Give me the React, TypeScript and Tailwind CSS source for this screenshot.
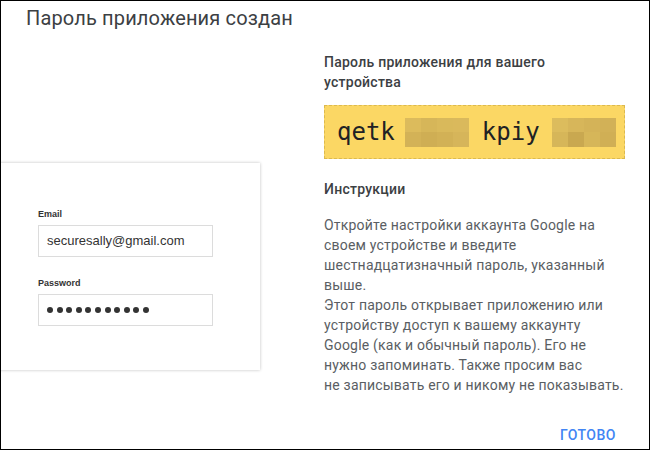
// App password created dialog (Google account, RU locale)

const blockA = ["#dcbb5c", "#d6b659", "#d9b95b", "#dab95c", "#d3b257", "#cfae54", "#d2b156", "#d6b55a"];
const blockB = ["#dcbc5d", "#d7b65a", "#d4b358", "#d2b157", "#d6b659", "#c9a850", "#d6b659", "#d0af55"];

function Blur({ colors }: { colors: string[] }) {
  return (
    <div className="grid grid-cols-4 w-[64px] h-[29px]">
      {colors.map((c, i) => (
        <div key={i} style={{ backgroundColor: c }} />
      ))}
    </div>
  );
}

const lines = [
  "Откройте настройки аккаунта Google на",
  "своем устройстве и введите",
  "шестнадцатизначный пароль, указанный",
  "выше.",
  "Этот пароль открывает приложению или",
  "устройству доступ к вашему аккаунту",
  "Google (как и обычный пароль). Его не",
  "нужно запоминать. Также просим вас",
  "не записывать его и никому не показывать.",
];

export default function App() {
  return (
    <div className="w-[650px] h-[450px] border border-black bg-white overflow-hidden font-['Roboto',sans-serif]">
      <h1 className="pl-[25px] pt-[3px] text-[20px] leading-[28px] tracking-[0.15px] text-[#3c4043]">
        Пароль приложения создан
      </h1>

      <div className="flex">
        {/* left: illustration of a sign-in card */}
        <div className="w-[323px] shrink-0 pt-[131px]">
          <div className="w-[280px] h-[207px] -ml-[21px] bg-white shadow-[0_0_3px_rgba(0,0,0,0.25)] pl-[58px] pt-[45px] font-['Liberation_Sans',Arial,sans-serif]">
            <div className="text-[9px] leading-[12px] font-bold text-[#333]">Email</div>
            <div className="mt-[5px] w-[175px] h-[32px] border border-[#dcdcdc] pl-[8px] flex items-center text-[13px] text-[#333]">
              securesally@gmail.com
            </div>
            <div className="mt-[20px] text-[9px] leading-[12px] font-bold text-[#333]">Password</div>
            <div className="mt-[5px] w-[175px] h-[32px] border border-[#dcdcdc] pl-[8px] flex items-center gap-[3.6px]">
              {Array.from({ length: 11 }).map((_, i) => (
                <span key={i} className="w-[6px] h-[6px] rounded-full bg-[#333]" />
              ))}
            </div>
          </div>
        </div>

        {/* right: password + instructions */}
        <div className="w-[301px] pt-[20px] flex flex-col">
          <div className="text-[14px] leading-[20px] font-medium tracking-[0.25px] text-[#3c4043]">
            Пароль приложения для вашего
            <br />
            устройства
          </div>
          <div className="mt-[13px] h-[54px] border border-dashed border-[#dcb94f] bg-[#fbd764] flex items-center pl-[12px] font-['DejaVu_Sans_Mono',monospace] text-[24px] text-[#202124]">
            <span>qetk</span>
            <div className="ml-[10px]">
              <Blur colors={blockA} />
            </div>
            <span className="ml-[13px]">kpiy</span>
            <div className="ml-[12px]">
              <Blur colors={blockB} />
            </div>
          </div>

          <div className="mt-[20px] text-[14px] leading-[20px] font-medium tracking-[0.25px] text-[#3c4043]">
            Инструкции
          </div>
          <div className="mt-[16px] text-[14px] leading-[20px] tracking-[0.2px] text-[#5a5e63]">
            {lines.map((l, i) => (
              <div key={i} className="whitespace-nowrap">
                {l}
              </div>
            ))}
          </div>

          <div className="mt-[30px] flex justify-end pr-[9px]">
            <button className="text-[14px] leading-[20px] font-medium tracking-[0.5px] text-[#4285f4]">
              ГОТОВО
            </button>
          </div>
        </div>
      </div>
    </div>
  );
}
